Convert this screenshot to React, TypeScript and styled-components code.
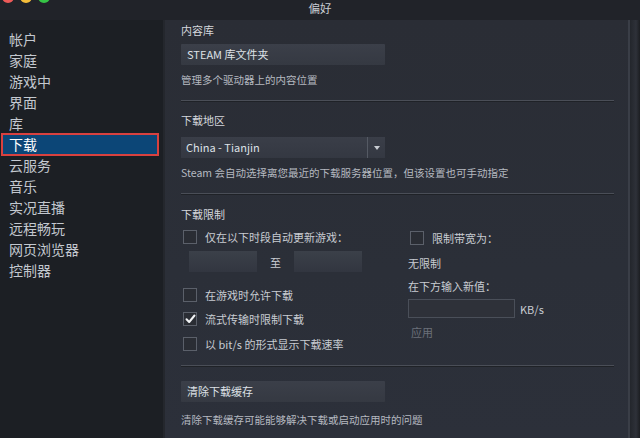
import React from "react";
import styled, { createGlobalStyle } from "styled-components";

const Global = createGlobalStyle`
  html, body { margin: 0; padding: 0; background: #1e2126; }
  body { font-family: "Noto Sans CJK SC", "Noto Sans", sans-serif; }
  #root { width: 640px; height: 438px; overflow: hidden; }
`;

const Window = styled.div`
  width: 640px;
  height: 438px;
  display: flex;
  flex-direction: column;
  background: #1e2126;
  overflow: hidden;
`;

const TitleBar = styled.div`
  height: 20px;
  flex: none;
  background: #212329;
  display: flex;
  align-items: flex-start;
  position: relative;
`;

const Lights = styled.div`
  display: flex;
  gap: 6px;
  padding-left: 2px;
  margin-top: -9px;
`;

const Light = styled.div<{ $c: string }>`
  width: 12px;
  height: 12px;
  border-radius: 50%;
  background: ${(p) => p.$c};
`;

const Title = styled.div`
  position: absolute;
  left: 0;
  right: 0;
  top: 2px;
  text-align: center;
  font-size: 11.5px;
  line-height: 13px;
  color: #c8ccd2;
`;

const Body = styled.div`
  flex: 1;
  display: flex;
  min-height: 0;
`;

const Sidebar = styled.div`
  width: 163px;
  flex: none;
  background: #1c1f24;
  padding-top: 9px;
  display: flex;
  flex-direction: column;
`;

const NavItem = styled.div<{ $active?: boolean }>`
  height: 21px;
  line-height: 21px;
  font-size: 14px;
  margin: 0 5px 0 2px;
  padding-left: 7px;
  color: ${(p) => (p.$active ? "#ffffff" : "#c3c8cf")};
  background: ${(p) => (p.$active ? "#0c4677" : "transparent")};
  outline: ${(p) => (p.$active ? "2px solid #d9413f" : "none")};
  outline-offset: -1px;
  box-sizing: border-box;
`;

const Main = styled.div`
  flex: 1;
  background: linear-gradient(180deg, #2a2d35 0%, #2b2f38 60%, #2c303a 100%);
  border-left: 2px solid #24272d;
  border-right: 2px solid #3a3e47;
  padding: 2px 0 0 16px;
  display: flex;
  flex-direction: column;
  color: #c3c7ce;
`;

const EdgeStrip = styled.div`
  width: 10px;
  flex: none;
  background: linear-gradient(90deg, #23262c, #2e3139 60%, #1c1e22);
`;

const Header = styled.div`
  font-size: 11px;
  color: #d4d7dc;
  height: 16px;
  line-height: 16px;
`;

const Button = styled.div`
  width: 204px;
  height: 21px;
  line-height: 21px;
  box-sizing: border-box;
  padding-left: 6px;
  font-size: 11px;
  color: #dde1e6;
  background: linear-gradient(180deg, #3b3f49, #353942);
  border-radius: 1px;
`;

const Desc = styled.div`
  font-size: 10.5px;
  color: #b5b9c0;
  height: 16px;
  line-height: 16px;
`;

const Separator = styled.div`
  height: 1px;
  background: #4a4e57;
  box-shadow: 0 1px 0 #1f2227;
  margin-right: 14px;
`;

const Select = styled.div`
  width: 204px;
  height: 21px;
  display: flex;
  background: linear-gradient(180deg, #3a3e48, #343842);
  box-sizing: border-box;
`;

const SelectValue = styled.div`
  flex: 1;
  font-size: 11px;
  line-height: 21px;
  padding-left: 5px;
  color: #dde1e6;
`;

const SelectArrow = styled.div`
  width: 17px;
  border-left: 1px solid #555a64;
  display: flex;
  align-items: center;
  justify-content: center;
`;

const Columns = styled.div`
  display: flex;
`;

const LeftCol = styled.div`
  width: 227px;
  display: flex;
  flex-direction: column;
`;

const RightCol = styled.div`
  display: flex;
  flex-direction: column;
  padding-top: 1px;
`;

const CheckRow = styled.div`
  display: flex;
  align-items: center;
  height: 16px;
  gap: 8px;
  padding-left: 2px;
  font-size: 11px;
  color: #c8ccd2;
`;

const Box = styled.div`
  width: 12px;
  height: 12px;
  border: 1px solid #5b606a;
  background: #2a2d34;
  display: flex;
  align-items: center;
  justify-content: center;
  flex: none;
`;

const TimeRow = styled.div`
  display: flex;
  align-items: center;
  padding-left: 8px;
  font-size: 11px;
  color: #c8ccd2;
`;

const TimeInput = styled.div`
  width: 68px;
  height: 21px;
  background: linear-gradient(180deg, #3b4049, #323640);
`;

const To = styled.div`
  width: 37px;
  text-align: center;
`;

const Plain = styled.div<{ $dim?: boolean }>`
  font-size: 11px;
  height: 16px;
  line-height: 16px;
  padding-left: ${(p) => (p.$dim ? "3px" : "0")};
  color: ${(p) => (p.$dim ? "#6b707a" : "#c8ccd2")};
`;

const RateRow = styled.div`
  display: flex;
  align-items: center;
  gap: 5px;
  font-size: 11px;
  color: #c8ccd2;
`;

const RateInput = styled.div`
  width: 107px;
  height: 19px;
  box-sizing: border-box;
  border: 1px solid #4a4f59;
  background: #2e3139;
`;

const Gap = styled.div<{ $h: number }>`
  height: ${(p) => p.$h}px;
  flex: none;
`;

const Check = () => (
  <svg width="11" height="10" viewBox="0 0 11 10">
    <path d="M1.5 5.2 L4.2 8 L9.5 1.5" fill="none" stroke="#f2f4f6" strokeWidth="2" strokeLinecap="round" strokeLinejoin="round" />
  </svg>
);

const Arrow = () => (
  <svg width="6" height="4" viewBox="0 0 6 4">
    <path d="M0 0 L6 0 L3 4 Z" fill="#c8ccd2" />
  </svg>
);

const CB = ({ checked }: { checked?: boolean }) => <Box>{checked && <Check />}</Box>;

const nav = ["帐户", "家庭", "游戏中", "界面", "库", "下载", "云服务", "音乐", "实况直播", "远程畅玩", "网页浏览器", "控制器"];

export default function App() {
  return (
    <>
      <Global />
      <Window>
        <TitleBar>
          <Lights>
            <Light $c="#ee5a58" />
            <Light $c="#f4bd3a" />
            <Light $c="#36c446" />
          </Lights>
          <Title>偏好</Title>
        </TitleBar>
        <Body>
          <Sidebar>
            {nav.map((n) => (
              <NavItem key={n} $active={n === "下载"}>
                {n}
              </NavItem>
            ))}
          </Sidebar>
          <Main>
            <Header>内容库</Header>
            <Gap $h={6} />
            <Button>STEAM 库文件夹</Button>
            <Gap $h={7} />
            <Desc>管理多个驱动器上的内容位置</Desc>
            <Gap $h={12} />
            <Separator />
            <Gap $h={11} />
            <Header>下载地区</Header>
            <Gap $h={9} />
            <Select>
              <SelectValue>China - Tianjin</SelectValue>
              <SelectArrow>
                <Arrow />
              </SelectArrow>
            </Select>
            <Gap $h={7} />
            <Desc>Steam 会自动选择离您最近的下载服务器位置，但该设置也可手动指定</Desc>
            <Gap $h={12} />
            <Separator />
            <Gap $h={12} />
            <Header>下载限制</Header>
            <Gap $h={7} />
            <Columns>
              <LeftCol>
                <CheckRow>
                  <CB />
                  仅在以下时段自动更新游戏：
                </CheckRow>
                <Gap $h={6} />
                <TimeRow>
                  <TimeInput />
                  <To>至</To>
                  <TimeInput />
                </TimeRow>
                <Gap $h={15} />
                <CheckRow>
                  <CB />
                  在游戏时允许下载
                </CheckRow>
                <Gap $h={8} />
                <CheckRow>
                  <CB checked />
                  流式传输时限制下载
                </CheckRow>
                <Gap $h={9} />
                <CheckRow>
                  <CB />
                  以 bit/s 的形式显示下载速率
                </CheckRow>
              </LeftCol>
              <RightCol>
                <CheckRow>
                  <CB />
                  限制带宽为：
                </CheckRow>
                <Gap $h={9} />
                <Plain>无限制</Plain>
                <Gap $h={7} />
                <Plain>在下方输入新值：</Plain>
                <Gap $h={5} />
                <RateRow>
                  <RateInput />
                  KB/s
                </RateRow>
                <Gap $h={6} />
                <Plain $dim>应用</Plain>
              </RightCol>
            </Columns>
            <Gap $h={13} />
            <Separator />
            <Gap $h={15} />
            <Button>清除下载缓存</Button>
            <Gap $h={10} />
            <Desc>清除下载缓存可能能够解决下载或启动应用时的问题</Desc>
          </Main>
          <EdgeStrip />
        </Body>
      </Window>
    </>
  );
}
